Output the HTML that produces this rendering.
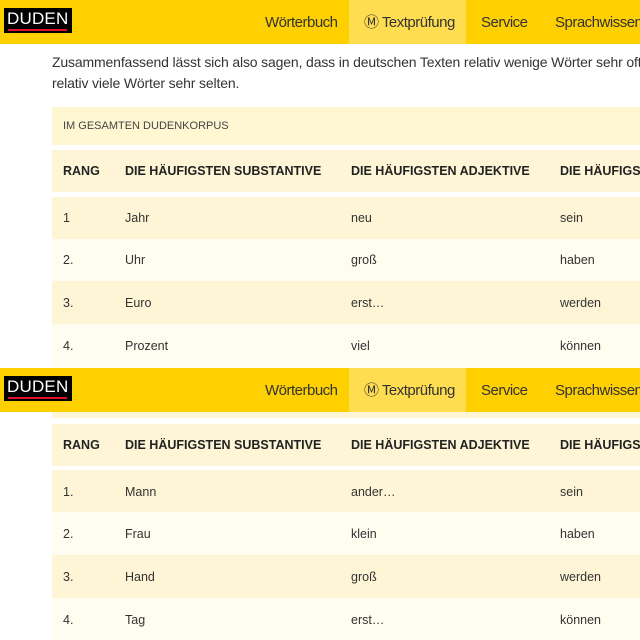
<!DOCTYPE html>
<html><head><meta charset="utf-8"><style>
*{margin:0;padding:0;box-sizing:border-box}
body{width:640px;height:640px;overflow:hidden;background:#fff;font-family:"Liberation Sans",Arial,sans-serif;position:relative;color:#333}
.hdr{position:absolute;left:0;width:640px;height:44px;background:#ffd000;overflow:hidden}
.logo{position:absolute;left:4px;top:8px;width:68px;height:25px;background:#000;color:#fff;font-size:17px;line-height:22px;padding-left:3px;letter-spacing:0.2px}
.logo i{position:absolute;left:4px;right:5px;top:21px;height:2px;background:#e0102a}
.tab{position:absolute;top:0;height:44px;line-height:46px;font-size:15px;color:#333;white-space:nowrap;letter-spacing:-0.5px}
.act{background:#ffdd50}
.r{position:absolute;left:52px;width:588px;font-size:12.5px;overflow:hidden;white-space:nowrap}
.r span{position:absolute}
.h{font-weight:bold;font-size:12.5px;color:#222}
.y{background:#fdf5d6}.w{background:#fffcf0}
</style></head><body>
<div class="hdr" style="top:0">
<div class="logo">DUDEN<i></i></div>
<div class="tab" style="left:265px">Wörterbuch</div>
<div class="tab act" style="left:349px;width:117px;padding-left:15px">Ⓜ Textprüfung</div>
<div class="tab" style="left:481px">Service</div>
<div class="tab" style="left:555px">Sprachwissen</div>
</div>
<div style="position:absolute;left:52px;top:52px;width:588px;overflow:hidden;font-size:14px;line-height:21px;color:#333;white-space:nowrap;letter-spacing:-0.15px">Zusammenfassend lässt sich also sagen, dass in deutschen Texten relativ wenige Wörter sehr oft vorkommen<br>relativ viele Wörter sehr selten.</div>
<div class="r y" style="top:107px;height:38px;background:#fff6d2"><span style="left:11px;top:13px;font-size:11px;color:#444">IM GESAMTEN DUDENKORPUS</span></div>
<div class="r y h" style="top:150px;height:42px"><span style="left:11px;top:14px">RANG</span><span style="left:73px;top:14px">DIE HÄUFIGSTEN SUBSTANTIVE</span><span style="left:299px;top:14px">DIE HÄUFIGSTEN ADJEKTIVE</span><span style="left:508px;top:14px">DIE HÄUFIGSTEN VERBEN</span></div>
<div class="r y" style="top:197px;height:42px"><span style="left:11px;top:14px">1</span><span style="left:73px;top:14px">Jahr</span><span style="left:299px;top:14px">neu</span><span style="left:508px;top:14px">sein</span></div>
<div class="r w" style="top:239px;height:42px"><span style="left:11px;top:14px">2.</span><span style="left:73px;top:14px">Uhr</span><span style="left:299px;top:14px">groß</span><span style="left:508px;top:14px">haben</span></div>
<div class="r y" style="top:281px;height:43px"><span style="left:11px;top:15px">3.</span><span style="left:73px;top:15px">Euro</span><span style="left:299px;top:15px">erst…</span><span style="left:508px;top:15px">werden</span></div>
<div class="r w" style="top:324px;height:44px"><span style="left:11px;top:15px">4.</span><span style="left:73px;top:15px">Prozent</span><span style="left:299px;top:15px">viel</span><span style="left:508px;top:15px">können</span></div>
<div class="hdr" style="top:368px">
<div class="logo">DUDEN<i></i></div>
<div class="tab" style="left:265px">Wörterbuch</div>
<div class="tab act" style="left:349px;width:117px;padding-left:15px">Ⓜ Textprüfung</div>
<div class="tab" style="left:481px">Service</div>
<div class="tab" style="left:555px">Sprachwissen</div>
</div>
<div class="r y" style="top:412px;height:6px"></div>
<div class="r y h" style="top:424px;height:42px"><span style="left:11px;top:14px">RANG</span><span style="left:73px;top:14px">DIE HÄUFIGSTEN SUBSTANTIVE</span><span style="left:299px;top:14px">DIE HÄUFIGSTEN ADJEKTIVE</span><span style="left:508px;top:14px">DIE HÄUFIGSTEN VERBEN</span></div>
<div class="r y" style="top:470px;height:42px"><span style="left:11px;top:15px">1.</span><span style="left:73px;top:15px">Mann</span><span style="left:299px;top:15px">ander…</span><span style="left:508px;top:15px">sein</span></div>
<div class="r w" style="top:512px;height:43px"><span style="left:11px;top:15px">2.</span><span style="left:73px;top:15px">Frau</span><span style="left:299px;top:15px">klein</span><span style="left:508px;top:15px">haben</span></div>
<div class="r y" style="top:555px;height:43px"><span style="left:11px;top:15px">3.</span><span style="left:73px;top:15px">Hand</span><span style="left:299px;top:15px">groß</span><span style="left:508px;top:15px">werden</span></div>
<div class="r w" style="top:598px;height:42px"><span style="left:11px;top:15px">4.</span><span style="left:73px;top:15px">Tag</span><span style="left:299px;top:15px">erst…</span><span style="left:508px;top:15px">können</span></div>
</body></html>
